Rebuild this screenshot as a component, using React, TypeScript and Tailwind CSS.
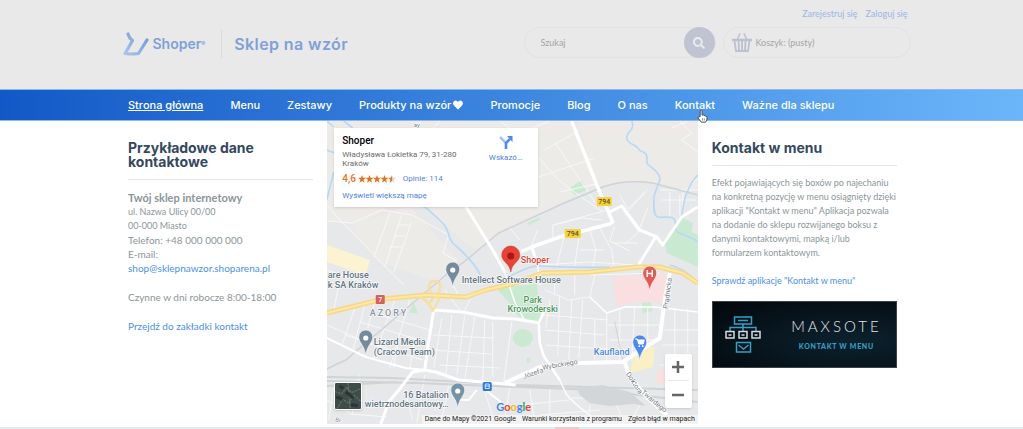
import React from "react";
import { FaHeart, FaSearch } from "react-icons/fa";

const menu = [
  { title: "Strona główna", active: true },
  { title: "Menu" },
  { title: "Zestawy" },
  { title: "Produkty na wzór", heart: true },
  { title: "Promocje" },
  { title: "Blog" },
  { title: "O nas" },
  { title: "Kontakt", cursor: true },
  { title: "Ważne dla sklepu" },
];

const Header = () => {
  return (
    <header className="bg-[#e9e9e9] pb-[31px] pt-[7px]">
      <div className="mx-auto flex max-w-[806px] items-end justify-between pl-[14px] pr-[4px]">
        <a href="#" className="flex items-center text-[#7fa1d8]">
          <svg viewBox="0 0 26 24" className="h-6 w-[26px]" fill="none">
            <defs>
              <linearGradient id="logo" x1="0" y1="1" x2="1" y2="0">
                <stop offset="0" stopColor="#a9c5ea" />
                <stop offset="1" stopColor="#6f97d6" />
              </linearGradient>
            </defs>
            <path
              d="M5 2q1 4 4.500 6.500Q6 15 2 21.500q7 1 13.500 0L24 8"
              stroke="url(#logo)"
              strokeWidth="3.200"
              strokeLinejoin="round"
              strokeLinecap="round"
            />
          </svg>
          <span className="ml-1 font-['Inter'] text-sm font-semibold">
            Shoper<sup className="text-[6px]">®</sup>
          </span>
          <span className="ml-4 h-7 w-px bg-[#d9dade]" />
          <span className="ml-3 font-['Inter'] text-base font-semibold tracking-wide">
            Sklep na wzór
          </span>
        </a>
        <div className="flex flex-col gap-[6px] text-[9px] leading-[14px]">
          <div className="flex justify-end gap-2 pr-[3px] text-[#9db5e4]">
            <a href="#">Zarejestruj się</a>
            <a href="#">Zaloguj się</a>
          </div>
          <div className="flex gap-[7px] text-[#a3a5a8]">
            <form className="flex h-[31px] w-[192px] items-center rounded-full border border-[#e1e2e4]">
              <input
                type="text"
                aria-label="Szukaj"
                placeholder="Szukaj"
                className="min-w-0 flex-1 bg-transparent pl-4 outline-none placeholder:text-[#a3a5a8]"
              />
              <button
                type="button"
                aria-label="Szukaj"
                className="flex h-[31px] w-[31px] items-center justify-center rounded-full bg-[#c0c4d2] text-[#ebebee]"
              >
                <FaSearch className="h-3 w-3" />
              </button>
            </form>
            <a
              href="#"
              className="flex h-[31px] w-[188px] items-center gap-1 rounded-full border border-[#e1e2e4] pl-2"
            >
              <svg viewBox="0 0 20 19" className="h-[19px] w-5" fill="none" stroke="#bbc1d0">
                <path d="M0 7h20" strokeWidth="2.500" />
                <path d="M5 7l3-6.500M15 7l-3-6.500" strokeWidth="1.500" />
                <path d="M2.500 8l1.500 10h12l1.500-10" strokeWidth="1.800" />
                <path d="M6.500 8l.5 10M10 8v10M13.500 8l-.5 10" strokeWidth="1.800" />
              </svg>
              Koszyk: (pusty)
            </a>
          </div>
        </div>
      </div>
    </header>
  );
};

const HandCursor = () => (
  <svg viewBox="0 0 12 15" className="absolute left-[22px] top-3 z-10 h-[14px] w-[11px]">
    <path
      d="M3.500 8V2q0-1 1-1t1 1v4.500q2-.6 2.300.6 1.400-.4 1.700.8 1.500-.2 1.500 1.300 0 3-1.500 5H4.500Q3 11.500 1 9.500q0-1.300 1.200-1.100z"
      fill="#fff"
      stroke="#444"
      strokeWidth="1"
    />
    <path d="M6 10v2.500M8 10v2.500" stroke="#555" strokeWidth=".7" />
  </svg>
);

const Navbar = () => {
  return (
    <nav className="border-y border-[#8fb8ea] bg-linear-to-r from-[#1259c7] via-[#3d86df] to-[#6bb6fa]">
      <ul className="mx-auto flex h-[30px] max-w-[771px] items-center gap-[27px] whitespace-nowrap pl-[2px] font-['Inter'] text-[11px] font-medium text-white">
        {menu.map((item) => (
          <li key={item.title} className="relative">
            <a
              href="#"
              className={
                item.active ? "underline" : "flex items-center gap-[2px]"
              }
            >
              {item.title}
              {item.heart && <FaHeart className="h-[10px] w-[10px]" />}
            </a>
            {item.cursor && <HandCursor />}
          </li>
        ))}
      </ul>
    </nav>
  );
};

const Pin = ({ x, y, color, children }: any) => (
  <g transform={`translate(${x} ${y})`}>
    <path
      d="M0 11C-1-0-7-2-7-8a7 7 0 0 1 14 0C7-2 1 0 0 11z"
      fill={color}
      stroke="#fff"
      strokeWidth=".6"
    />
    {children || <circle cy="-7" r="2.600" fill="#fff" />}
  </g>
);

const MapDrawing = () => {
  return (
    <svg
      viewBox="327 121 371 303"
      preserveAspectRatio="xMidYMid slice"
      className="absolute inset-0 h-full w-full"
      fontFamily="Roboto, sans-serif"
    >
      <rect x="320" y="115" width="385" height="315" fill="#e7e8e9" />
      {/* open land */}
      <g fill="#edebe8">
        <path d="M327 121h245l25 63-37 20-44 21-40 25-38-30-20-28-60 33-31-5z" />
        <path d="M578 121h120v70l-45-8-26-2-24 6-9-10z" />
        <path d="M409 205l50 55-20 22-60-20-30-35z" />
      </g>
      <path d="M327 245l43 15 -4 16-24-9-15-5z" fill="#fcf3d2" />
      <path d="M638 347h17l-2 20-23 6 4-16z" fill="#fbefc4" />
      <path d="M613 277l54-2-4 27h-30l-16 5zM657 370h8v14h-8z" fill="#f9dfdf" />
      {/* parks */}
      <g fill="#c9ead0">
        <path d="M496 288l41-4 4 34-3 5-11-3-9-4-9-14z" />
        <ellipse cx="523" cy="338" rx="10" ry="9" />
        <path d="M670 238l13-20 10 5-1 9 6 3v32l-31-14-2-9z" />
        <path d="M570 188l12-8 5 10-12 5zM527 223l13-6v3l-11 5zM409 313l5-10 4 10zM642 303l9-1 2 9-10 2zM527 358h3v5h-3z" />
      </g>
      {/* side streets */}
      <g fill="none" stroke="#f8f8f8" strokeWidth="1">
        <path d="M327 221l25 2 30-13 30 5 37 20M327 205l15 17 62 63M390 214l-16 43M402 215l-17 52M412 222l-18 50M398 225h12M394 236h12M390 247h12M449 235l-6 18 14 8" />
        <path d="M440 121l-20 22M500 121l15 11M520 133l30-12M545 150l35-20M555 142l40 60M530 180l65-22M539 158l20 22 24 18 20 14M560 192l36-8M554 225l28-7 20 2M553 237v-12l44-12 13-4M565 234l-8 32M580 231l-5 35M590 230l6 20-3 16M600 228l12 22 2 15M615 226l-5 15 20 10M625 212l14 20-14 12M640 228l8-20M620 195l8 14 20-20M645 193l-20 22M613 243h25M580 250h25M540 265l50-3 46 3M538 230l-6 15M520 240l-10-12" />
        <path d="M680 121l12 12-10 7 16 12M672 128l16-7M660 190h38M662 200h34M670 192v24M680 195v20M698 178l-15 15v25" />
        <path d="M327 270l30 10 18 10M340 280l-6 30M355 308l-13 38M365 305l-12 46M395 300l-22 60M410 300l-20 68M345 335l78 25M360 322l60 18M380 315l50 15M327 325l46 20M376 298l-8 30M400 333l-6 35M415 338l-5 32" />
        <path d="M442 318l-8 50M452 315l-6 60M465 315l-8 60M475 317l-10 62M485 320l-2 62M493 322v55M433 335l60 3M431 350l60 4M440 365l60 3M512 322l-8 60M470 300l-6 12M445 290l15 20M450 278l10 20" />
        <path d="M545 290l24 10 20-3M550 300l-4 28M560 295l-2 60M572 300l-3 60M583 300l-4 58M543 315l65 5M545 330l60 5M546 345l60 4M595 320v40M555 278v16M575 275v20M595 275l-5 22 17 16M607 313v48M608 325h57M610 340h50M620 310v50M635 307l-3 54M648 308v35M607 352l40-5M665 330h33M663 345h35M675 308v60M688 308v45M660 365h20M590 275l70-2" />
        <path d="M327 400l25 14 35 3M335 380l-6 40M360 375l-8 40M405 390l8 30M425 375l-8 48M450 380l-8 40M485 392l10 30M510 388l-6 36M530 390l5 34M550 388v36M572 398h40M590 405v18M615 402l10 20M640 405l-10 18M520 405l50-5M540 415l60-5" />
      </g>
      {/* rivers */}
      <g fill="none" stroke="#b6d8f6" strokeWidth="1.600">
        <path d="M632 121c4 10-6 10-5 17s9 6 11 10c3 6 8 2 9 8s-2 6 3 10 11 8 10 14-6 12-6 20 0 16 4 17 15-2 17 3-2 8 3 12 14 4 20 10" strokeLinejoin="round" />
        <path d="M409 193c6 12 15 12 20 17s14 12 17 17 3 12 7 16 22 18 28 33" />
        <path d="M327 150l8 3M327 200l7-28M327 121l7 6M344 121l9 7M510 276c12-5 20-11 33-10s50 2 67 1M698 175c-8 8-14 20-16 42M670 265q15 3 28 18" />
      </g>
      {/* railways */}
      <g fill="none" stroke="#d0d3d6" strokeWidth="1.500">
        <path d="M327 369l19-9 106-90 11-7 36-30 61-28 43-18q22-8 50-4l45 12" />
        <path d="M327 377l66 1 123 7 182 5M327 381l90 2 180 7 101 12M327 386l70-4" strokeWidth="2" />
        <path d="M615 322l8 38" strokeWidth="1" />
      </g>
      <path d="M577 388l26-3 27 7 16 14-12-2-24 2-20-3-10-8z" fill="#d3d6d9" />
      {/* main streets */}
      <g fill="none" stroke="#fff" strokeWidth="3" strokeLinejoin="round">
        <path d="M572 121l25 64 16 37-3 2-50 13-28 10-22 10" strokeWidth="3.500" />
        <path d="M462 200l31 50 12 22M532 247l6 18" />
        <path d="M505 272l10 30 9 17M538 265l2 20" strokeWidth="1.500" />
        <path d="M545 310l-6 13 1 20 4 13 16 24" strokeWidth="2.500" />
        <path d="M560 380l7 15 8 8 18 15" strokeWidth="1.500" />
        <path d="M610 212l12-6 18 24 17 7 6 8 19-28 16-10M656 237l-18 29" />
        <path d="M434 310l-6 37-3 23 11 2 23 8 57 5M434 310l29 2 30 6 23 1 24 4" />
        <path d="M425 370l-12 2-14 18-10 12-8 22" />
        <path d="M327 338l39 19 40 11 19 2M477 390l-8 10h-14M486 390l15 12" strokeWidth="2" />
        <path d="M505 383l35-16 37-4 46-1 37-24 5-38 5-27M625 362l5 15 17 20 20 18" strokeWidth="4" />
        <path d="M590 297l17 16 18-6h30l43 5" strokeWidth="1.500" />
      </g>
      {/* ring road */}
      {["#f6d884", "#fce8a8"].map((color, i) => (
        <g key={color} fill="none" stroke={color} strokeLinejoin="round">
          <path
            d="M327 313l56-14 43-4 40 2 20-7 30-7 27-10 47-1 47-5 23 0 23 6 15 10"
            strokeWidth={i ? 2 : 5}
          />
          <path
            d="M419 296q10 5 14 15l6-11q-2-7 1-10a6 6 0 1 0-11-2q2 5 8 8-7 4-8 10"
            strokeWidth={i ? 1 : 2}
          />
        </g>
      ))}
      {/* road numbers */}
      <g fontSize="7" fontWeight="500" textAnchor="middle" fill="#5f5322">
        <rect x="597" y="197" width="15" height="9" rx="1" fill="#f7d23e" />
        <text x="604.500" y="204">794</text>
        <rect x="565" y="229" width="16" height="9" rx="1" fill="#f7d23e" />
        <text x="573" y="236">794</text>
        <rect x="376" y="295" width="9" height="9" rx="1" fill="#d9605a" />
        <text x="380.500" y="302" fill="#fff">7</text>
      </g>
      {/* place labels */}
      <g
        fontSize="9"
        fontWeight="500"
        fill="#5f7482"
        stroke="#fff"
        strokeWidth="1.200"
        paintOrder="stroke"
      >
        <text x="328" y="278">are House</text>
        <text x="328" y="288">k SA Kraków</text>
        <text x="462" y="283">Intellect Software House</text>
        <text x="374" y="345">Lizard Media</text>
        <text x="374" y="355">(Cracow Team)</text>
        <text x="449" y="398" textAnchor="end">16 Batalion</text>
        <text x="449" y="407" textAnchor="end">wietrznodesantowy…</text>
        <text x="370" y="316" fill="#8a939b" letterSpacing="2">AZORY</text>
        <text x="533" y="303" textAnchor="middle" fill="#4c9560">Park</text>
        <text x="533" y="312" textAnchor="middle" fill="#4c9560">Krowoderski</text>
        <text x="594" y="355" fill="#4b83de">Kaufland</text>
        <text x="521" y="263" fill="#dc3e33">Shoper</text>
      </g>
      <g fontSize="7" fill="#737c84" stroke="#fff" strokeWidth="1.200" paintOrder="stroke">
        <text transform="translate(524 379) rotate(-19)">Józefa</text>
        <text transform="translate(543 370) rotate(-10)">Wybickiego</text>
        <text transform="translate(626 374) rotate(57)">Doktora</text>
        <text transform="translate(641 393) rotate(40)">Twardego</text>
        <text transform="translate(668 309) rotate(-82)">Prądnicka</text>
        <text transform="translate(335 421) rotate(20)" fontSize="6">Br</text>
        <text x="414" y="127" fontSize="6">ay</text>
      </g>
      <Pin x="453" y="277" color="#758b99" />
      <Pin x="366" y="345" color="#758b99" />
      <Pin x="458" y="398" color="#7393a7" />
      <Pin x="640" y="350" color="#4b8bf0">
        <path
          d="M-4.500-11h2l1.500 5h4.500l1-4h-6.500"
          fill="#fff"
          stroke="#fff"
          strokeWidth="1"
        />
        <circle cx="-.5" cy="-3.800" r=".9" fill="#fff" />
        <circle cx="3" cy="-3.800" r=".9" fill="#fff" />
      </Pin>
      <Pin x="650" y="281" color="#e35b53">
        <path d="M-2.500-11v7M2.500-11v7M-2.500-7.500h5" stroke="#fff" strokeWidth="1.500" />
      </Pin>
      <g transform="translate(511 272)">
        <path
          d="M0 0C-1-9-9-10-9-17a9 9 0 0 1 18 0C9-10 1-9 0 0z"
          fill="#e94335"
          stroke="#d0372b"
          strokeWidth=".6"
        />
        <circle cy="-16" r="3.500" fill="#a51b14" />
      </g>
      <rect x="483" y="382" width="9" height="9" rx="1.500" fill="#2e78dc" />
      <path d="M485.500 384h4v4.500h-4zM485.500 386h4" fill="none" stroke="#fff" strokeWidth=".8" />
    </svg>
  );
};

const Stars = () => (
  <svg viewBox="0 0 38 8" className="h-2 w-[38px]">
    <defs>
      <linearGradient id="half">
        <stop offset=".55" stopColor="#e7711b" />
        <stop offset=".55" stopColor="#d5d5d5" />
      </linearGradient>
    </defs>
    {[0, 1, 2, 3, 4].map((n) => (
      <path
        key={n}
        transform={`translate(${n * 7.5} 0)`}
        d="M4 0l1 2.800h3L5.600 4.700l.9 3L4 6 1.500 7.700l.9-3L0 2.800h3z"
        fill={n === 4 ? "url(#half)" : "#e7711b"}
      />
    ))}
  </svg>
);

const ContactMap = () => {
  return (
    <section className="relative h-[303px] overflow-hidden font-['Roboto']">
      <MapDrawing />
      <div className="absolute left-[7px] top-[7px] flex h-[79px] w-[204px] justify-between bg-white py-[7px] pl-2 pr-4 text-[8px] leading-[9px] shadow">
        <div className="flex flex-col items-start">
          <p className="text-[10px] font-medium leading-3 text-black">Shoper</p>
          <p className="mt-[3px] text-[#6b6b6b]">
            Władysława Łokietka 79, 31-280
            <br />
            Kraków
          </p>
          <div className="mt-[6px] flex items-center gap-[2px]">
            <span className="text-[10px] font-medium text-[#e7711b]">4,6</span>
            <Stars />
            <a href="#" className="ml-[5px] text-[#4f83dd]">
              Opinie: 114
            </a>
          </div>
          <a href="#" className="mt-2 text-[#4f83dd]">
            Wyświetl większą mapę
          </a>
        </div>
        <a href="#" className="flex flex-col items-center gap-1 text-[#4f83dd]">
          <svg viewBox="0 0 14 14" className="h-[14px] w-[14px]" fill="none">
            <path d="M1 2l6 6" stroke="#a5c5f8" strokeWidth="2.600" />
            <path d="M7 14V8l4-4" stroke="#4b8af0" strokeWidth="2.600" />
            <path d="M8 1h5.500v6z" fill="#4b8af0" />
          </svg>
          Wskazó…
        </a>
      </div>
      <button
        type="button"
        aria-label="Satelita"
        className="absolute bottom-[14px] left-[7px] h-7 w-7 overflow-hidden rounded-xs border border-white bg-[#3f4d48] shadow"
      >
        <svg viewBox="0 0 24 24" fill="none" className="h-full w-full">
          <path
            d="M0 8l6 2 5-6 4 5 9-4M2 24l5-9 6 4 4-8 7 6M12 0l2 24"
            stroke="#65716e"
            strokeWidth="1.200"
            strokeDasharray="2 1"
          />
          <path d="M1 13l6 2M10 8l7 6M15 20l6 1M4 3l4 2" stroke="#2b3634" strokeWidth="3" />
        </svg>
      </button>
      <div className="absolute bottom-4 right-[6px] flex w-[27px] flex-col rounded-xs bg-white px-[3px] shadow">
        <button
          type="button"
          aria-label="Powiększ"
          className="flex h-[27px] items-center justify-center border-b border-[#e6e6e6]"
        >
          <svg viewBox="0 0 12 12" className="h-3 w-3">
            <path d="M6 0v12M0 6h12" stroke="#666" strokeWidth="2.500" />
          </svg>
        </button>
        <button
          type="button"
          aria-label="Pomniejsz"
          className="flex h-[27px] items-center justify-center"
        >
          <svg viewBox="0 0 12 12" className="h-3 w-3">
            <path d="M0 6h12" stroke="#666" strokeWidth="2.500" />
          </svg>
        </button>
      </div>
      <span className="absolute bottom-[10px] left-[169px] font-['Lato'] text-[11px] font-bold leading-[14px]">
        <span className="text-[#4285f4]">G</span>
        <span className="text-[#ea4335]">o</span>
        <span className="text-[#fbbc05]">o</span>
        <span className="text-[#4285f4]">g</span>
        <span className="text-[#34a853]">l</span>
        <span className="text-[#ea4335]">e</span>
      </span>
      <div className="absolute bottom-0 right-0 flex gap-[6px] whitespace-nowrap bg-[#f3f3f3] px-[3px] text-[7px] leading-[9px] text-[#222]">
        <span>Dane do Mapy ©2021 Google</span>
        <a href="#">Warunki korzystania z programu</a>
        <a href="#">Zgłoś błąd w mapach</a>
      </div>
    </section>
  );
};

const ContactInfo = () => {
  return (
    <section className="pt-5 text-[10px] leading-[14px] text-[#8b9699]">
      <h2 className="font-['Inter'] text-sm font-bold leading-[14px] text-[#34495e]">
        Przykładowe dane kontaktowe
      </h2>
      <hr className="mb-[11px] mt-[10px] border-[#e3e5e6]" />
      <p className="text-[11px] font-bold">Twój sklep internetowy</p>
      <p className="text-[9px]">ul. Nazwa Ulicy 00/00</p>
      <p className="text-[9px]">00-000 Miasto</p>
      <p>Telefon: +48 000 000 000</p>
      <p>E-mail:</p>
      <a href="#" className="text-[#4a90ee]">
        shop@sklepnawzor.shoparena.pl
      </a>
      <p className="my-[15px]">Czynne w dni robocze 8:00-18:00</p>
      <a href="#" className="text-[#4a90ee]">
        Przejdź do zakładki kontakt
      </a>
    </section>
  );
};

const Banner = () => {
  return (
    <a
      href="#"
      className="mt-[13px] flex h-[67px] items-center border border-[#3b4348] bg-radial-[at_75%_60%] from-[#0c222e] to-[#03070c] pl-3"
    >
      <svg viewBox="0 0 36 37" className="h-[37px] w-9 shrink-0" fill="none" strokeWidth="1.500">
        <g stroke="#35a0c4">
          <path d="M9.500 1h17v7h-17zM13 4.500h10M18 8v7M5 15v-3.500h26V15" />
          <path d="M11.500 26.500h14v9.500h-14zM13.500 29l5 4 5-4" />
        </g>
        <g stroke="#d9dcde">
          <path d="M1 15.500h8v6.500H1zM14 15.500h8v6.500h-8zM27 15.500h8v6.500h-8z" />
          <path d="M3.500 19h3M16.500 19h3M29.500 19h3" />
        </g>
      </svg>
      <span className="flex flex-1 flex-col items-center gap-2 pl-4 font-['Lato']">
        <span className="text-[15px] font-light leading-[14px] tracking-[3px] text-[#e4e7e8]">
          MAXSOTE
        </span>
        <span className="text-[7px] font-black leading-[10px] tracking-widest text-[#35a0c4]">
          KONTAKT W MENU
        </span>
      </span>
    </a>
  );
};

const MenuInfo = () => {
  return (
    <section className="pt-5 text-[9px] leading-[14px] text-[#8b9699]">
      <h2 className="font-['Inter'] text-sm font-bold leading-[14px] text-[#34495e]">
        Kontakt w menu
      </h2>
      <hr className="mb-[10px] mt-[10px] border-[#e3e5e6]" />
      <p className="whitespace-nowrap">
        Efekt pojawiających się boxów po najechaniu
        <br />
        na konkretną pozycję w menu osiągnięty dzięki
        <br />
        aplikacji "Kontakt w menu" Aplikacja pozwala
        <br />
        na dodanie do sklepu rozwijanego boksu z
        <br />
        danymi kontaktowymi, mapką i/lub
        <br />
        formularzem kontaktowym.
      </p>
      <a href="#" className="mt-[14px] block text-[#4a90ee]">
        Sprawdź aplikacje "Kontakt w menu"
      </a>
      <Banner />
    </section>
  );
};

const App = () => {
  return (
    <div className="bg-white font-['Lato',sans-serif]">
      <Header />
      <Navbar />
      <main className="mx-auto grid max-w-[771px] grid-cols-[minmax(0,1fr)_minmax(0,2fr)_minmax(0,1fr)] gap-[14px] pl-[2px]">
        <ContactInfo />
        <ContactMap />
        <MenuInfo />
      </main>
      <div className="mt-[3px] flex h-[2px] justify-center bg-[#e1ecee]">
        <span className="ml-[110px] w-6 bg-[#eccdc9]" />
      </div>
    </div>
  );
};

export default App;
